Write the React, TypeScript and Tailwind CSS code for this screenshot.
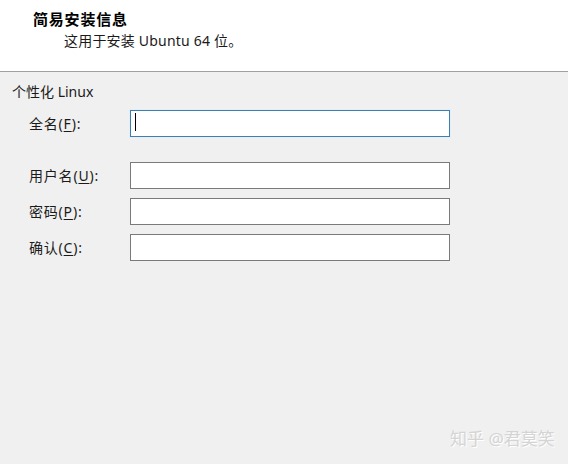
const font = "font-['Noto_Sans','Noto_Sans_CJK_SC',sans-serif]";

function Field({ label, keyChar, focused }: { label: string; keyChar: string; focused?: boolean }) {
  return (
    <div className="flex items-center">
      <span className="w-[101px] text-[14px] leading-[20px] tracking-[0.8px] text-[#1a1a1a]">
        {label}(<span className="underline underline-offset-2">{keyChar}</span>):
      </span>
      <div
        className={
          focused
            ? "relative h-[27px] w-[320px] border border-[#3c7fb1] bg-white shadow-[0_0_0_1px_#e3eef8]"
            : "h-[27px] w-[320px] border border-[#7a7a7a] bg-white"
        }
      >
        {focused && <div className="absolute left-[4px] top-[2px] h-[18px] w-px bg-black" />}
      </div>
    </div>
  );
}

export default function App() {
  return (
    <div className={`relative flex h-[464px] w-[568px] flex-col overflow-hidden bg-[#f0f0f0] ${font}`}>
      <header className="h-[72px] border-b border-[#a0a0a0] bg-white">
        <div className="ml-[33px] mt-[9px] text-[15px] font-bold leading-[20px] tracking-[0.8px] text-black">简易安装信息</div>
        <div className="ml-[64px] mt-[2px] text-[14px] leading-[20px] tracking-[0.2px] text-[#1a1a1a]">这用于安装 Ubuntu 64 位。</div>
      </header>

      <section className="flex flex-col pt-[10px]">
        <div className="pl-[12px] text-[14px] leading-[20px] text-[#1a1a1a]">个性化 Linux</div>
        <div className="mt-[8px] pl-[29px]">
          <Field label="全名" keyChar="F" focused />
        </div>
        <div className="mt-[25px] flex flex-col gap-[9px] pl-[29px]">
          <Field label="用户名" keyChar="U" />
          <Field label="密码" keyChar="P" />
          <Field label="确认" keyChar="C" />
        </div>
      </section>

      <div className="absolute left-[450px] top-[429px] text-[17px] leading-[20px] text-[#d4d4d4] [text-shadow:1px_1px_0_#ffffff]">
        知乎 @君莫笑
      </div>
    </div>
  );
}
